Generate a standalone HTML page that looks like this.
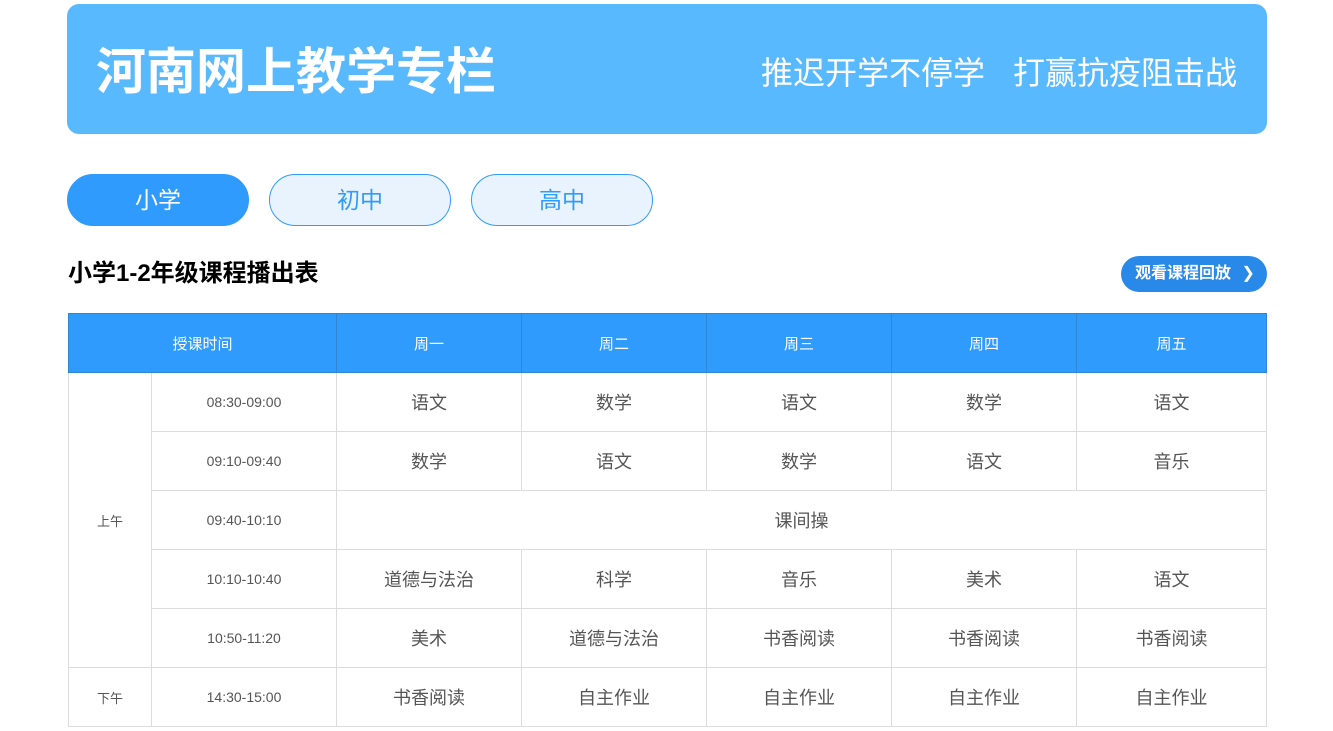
<!DOCTYPE html>
<html><head><meta charset="utf-8"><style>
body{margin:0;background:#fff;font-family:"Liberation Sans","Noto Sans CJK SC",sans-serif;width:1333px;height:731px;overflow:hidden;position:relative}
.banner{position:absolute;left:67px;top:4px;width:1200px;height:130px;background:#58b9fe;border-radius:12px;color:#fff}
.banner .t{position:absolute;left:29px;top:38px;font-size:50px;font-weight:bold;line-height:60px}
.banner .s{position:absolute;right:30px;top:47px;font-size:32px;line-height:44px}
.tab{position:absolute;top:174px;width:180px;height:50px;border-radius:26px;border:1px solid #2f9bfc;background:#e8f3fe;color:#2f9bfc;font-size:23px;text-align:center;line-height:50px}
.tab.on{background:#2f9bfc;color:#fff}
h2{position:absolute;left:68px;top:258px;margin:0;font-size:24px;font-weight:bold;line-height:32px;color:#000}
.btn{position:absolute;left:1121px;top:256px;width:146px;height:36px;border-radius:18px;background:#2889e8;color:#fff;font-size:16px;font-weight:bold;line-height:36px;text-indent:14px}
table{position:absolute;left:68px;top:313px;border-collapse:collapse;table-layout:fixed;width:1198px}
td,th{border:1px solid #dcdcdc;text-align:center;height:58px;padding:0;font-size:18px;color:#555}
th{background:#2f9bfc;color:#fff;font-weight:normal;font-size:15px;border-color:#2f86d6;border-top:1px solid #2f86d6}
td.s{font-size:14px}
</style></head><body>
<div class="banner"><div class="t">河南网上教学专栏</div><div class="s">推迟开学不停学<span style="display:inline-block;width:28px"></span>打赢抗疫阻击战</div></div>
<div class="tab on" style="left:67px">小学</div>
<div class="tab" style="left:269px">初中</div>
<div class="tab" style="left:471px">高中</div>
<h2>小学1-2年级课程播出表</h2>
<div class="btn">观看课程回放 <span style="font-weight:normal;margin-left:6px">&#x276F;</span></div>
<table>
<colgroup><col style="width:83px"><col style="width:185px"><col style="width:185px"><col style="width:185px"><col style="width:185px"><col style="width:185px"><col style="width:190px"></colgroup>
<tr><th colspan="2">授课时间</th><th>周一</th><th>周二</th><th>周三</th><th>周四</th><th>周五</th></tr>
<tr><td class="s" rowspan="5" style="font-size:13px">上午</td><td class="s">08:30-09:00</td><td>语文</td><td>数学</td><td>语文</td><td>数学</td><td>语文</td></tr>
<tr><td class="s">09:10-09:40</td><td>数学</td><td>语文</td><td>数学</td><td>语文</td><td>音乐</td></tr>
<tr><td class="s">09:40-10:10</td><td colspan="5">课间操</td></tr>
<tr><td class="s">10:10-10:40</td><td>道德与法治</td><td>科学</td><td>音乐</td><td>美术</td><td>语文</td></tr>
<tr><td class="s">10:50-11:20</td><td>美术</td><td>道德与法治</td><td>书香阅读</td><td>书香阅读</td><td>书香阅读</td></tr>
<tr><td class="s" style="font-size:13px">下午</td><td class="s">14:30-15:00</td><td>书香阅读</td><td>自主作业</td><td>自主作业</td><td>自主作业</td><td>自主作业</td></tr>
</table>
</body></html>
